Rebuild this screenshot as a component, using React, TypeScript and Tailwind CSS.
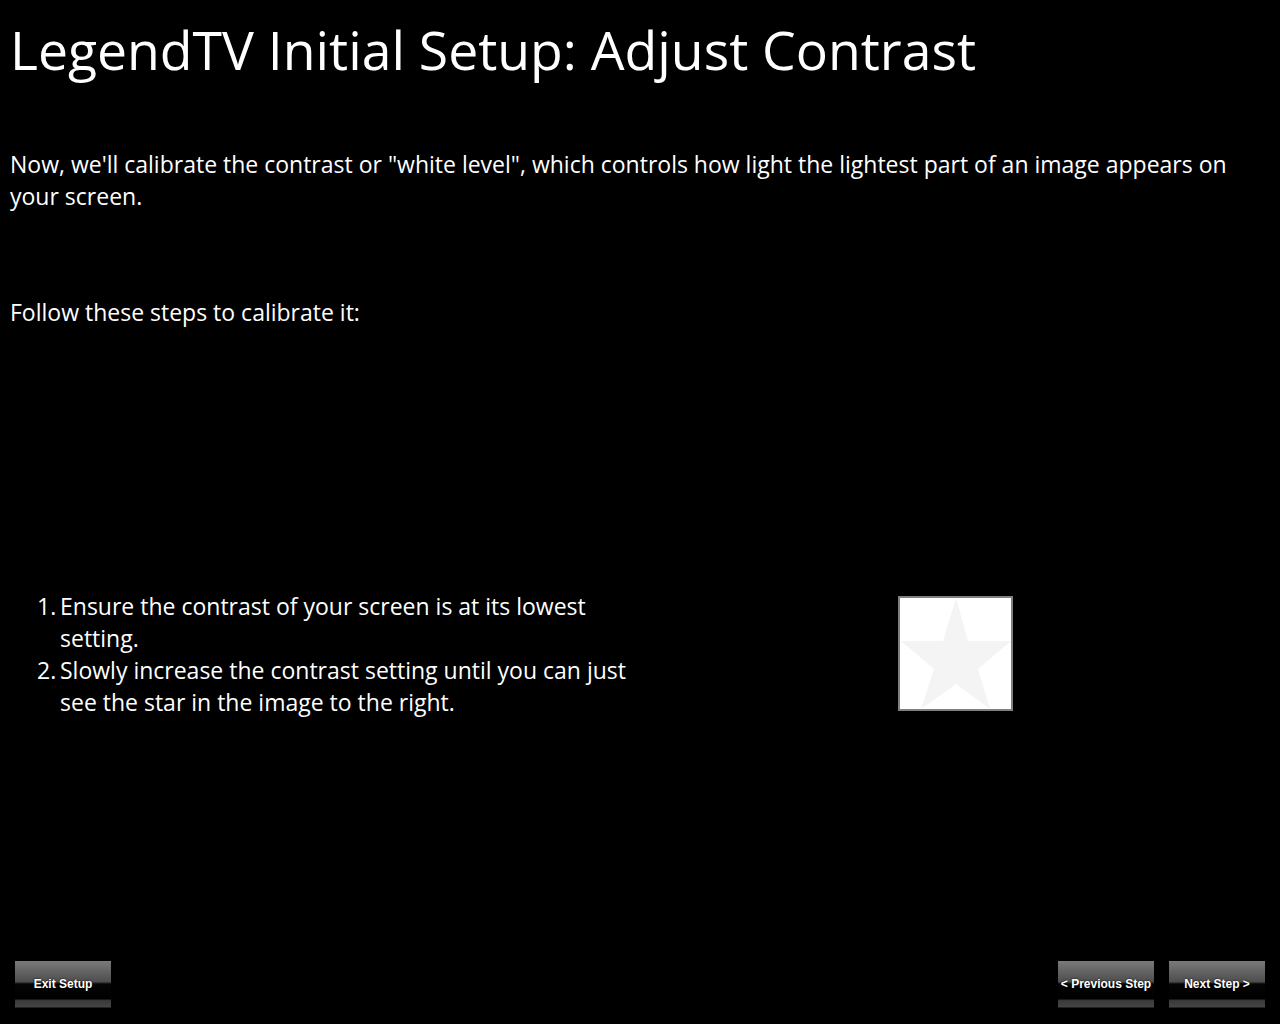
export default function App() {
  const font = { fontFamily: '"Open Sans", "Noto Sans", sans-serif' };
  const btn =
    "w-[96px] h-[47px] flex items-center justify-center text-white text-[12px] font-bold border-b border-[#222] [text-shadow:0_0_2px_#000] bg-[linear-gradient(to_bottom,#7a7a7a_0%,#4e4e4e_45%,#050505_50%,#000_82%,#3a3a3a_86%,#454545_100%)]";
  return (
    <div className="w-[1280px] h-[1024px] bg-black text-white flex flex-col overflow-hidden" style={font}>
      <h1 className="text-[53.5px] leading-[60px] pl-[10px] pt-[20px] whitespace-nowrap">LegendTV Initial Setup: Adjust Contrast</h1>
      <p className="text-[23px] leading-[32px] pl-[10px] pr-[20px] mt-[68px]">
        Now, we'll calibrate the contrast or "white level", which controls how light the lightest part of an image appears on your screen.
      </p>
      <p className="text-[23px] leading-[32px] pl-[10px] mt-[84px]">Follow these steps to calibrate it:</p>
      <div className="flex mt-[262px]">
        <div className="w-[640px] flex items-center">
          <ol className="text-[23px] leading-[32px] pl-[37px]">
            <li className="flex"><span className="w-[23px] shrink-0">1.</span><span>Ensure the contrast of your screen is at its lowest setting.</span></li>
            <li className="flex"><span className="w-[23px] shrink-0">2.</span><span>Slowly increase the contrast setting until you can just see the star in the image to the right.</span></li>
          </ol>
        </div>
        <div className="w-[630px] flex items-center justify-center">
          <div className="w-[115px] h-[115px] bg-white border-2 border-[#808080] -translate-y-px">
            <svg className="w-full h-full block" viewBox="0 0 111 111">
              <polygon points="56,0 68,43 111,43 78,71 90,111 56,86 21,111 34,71 1,43 43,43" fill="#f4f4f4" />
            </svg>
          </div>
        </div>
      </div>
      <div className="flex-1" />
      <div className="flex justify-between px-[15px] pb-[16px]" style={{ fontFamily: '"Liberation Sans", Arial, sans-serif' }}>
        <div className={btn}>Exit Setup</div>
        <div className="flex gap-[15px]">
          <div className={btn}>&lt; Previous Step</div>
          <div className={btn}>Next Step &gt;</div>
        </div>
      </div>
    </div>
  );
}
